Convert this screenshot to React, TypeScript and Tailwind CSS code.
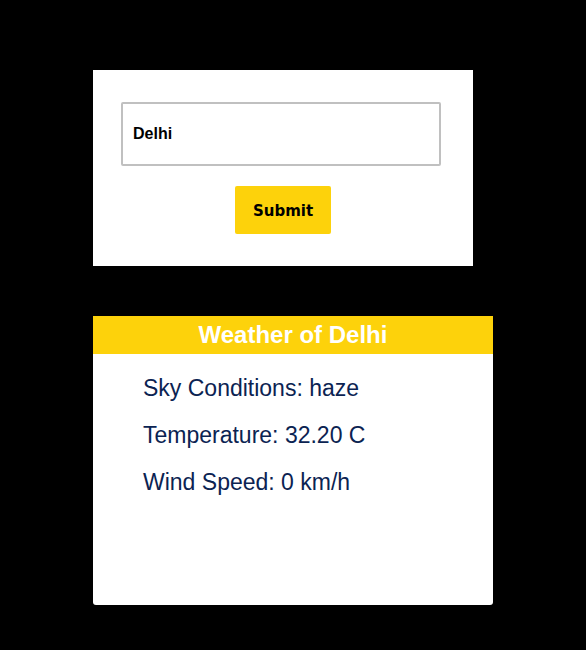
import React from 'react';

const App: React.FC = () => {
  return (
    <div className="min-h-[650px] bg-black pl-[93px] pt-[70px] font-['Liberation_Sans',Arial,sans-serif]">
      <div className="w-[380px] h-[196px] bg-white flex flex-col pt-[32px]">
        <input
          defaultValue="Delhi"
          className="ml-[28px] w-[320px] h-[64px] border-2 border-[#c0c0c0] rounded-[2px] px-[10px] text-[16px] font-bold text-black outline-none"
        />
        <button className="mt-[20px] ml-[142px] w-[96px] h-[48px] pt-[3px] bg-[#fdd20b] rounded-[2px] font-['DejaVu_Sans',sans-serif] font-bold text-[15px] text-black">
          Submit
        </button>
      </div>

      <div className="mt-[50px] w-[400px] h-[289px] bg-white rounded-b-[3px] overflow-hidden">
        <div className="h-[38px] bg-[#fdd20b] flex items-center justify-center text-white font-bold text-[24px]">
          Weather of Delhi
        </div>
        <div className="pl-[50px] pt-[22px] flex flex-col gap-[22px] text-[23px] text-[#0b2352] leading-[25px]">
          <p>Sky Conditions: haze</p>
          <p>Temperature: 32.20 C</p>
          <p>Wind Speed: 0 km/h</p>
        </div>
      </div>
    </div>
  );
};

export default App;
